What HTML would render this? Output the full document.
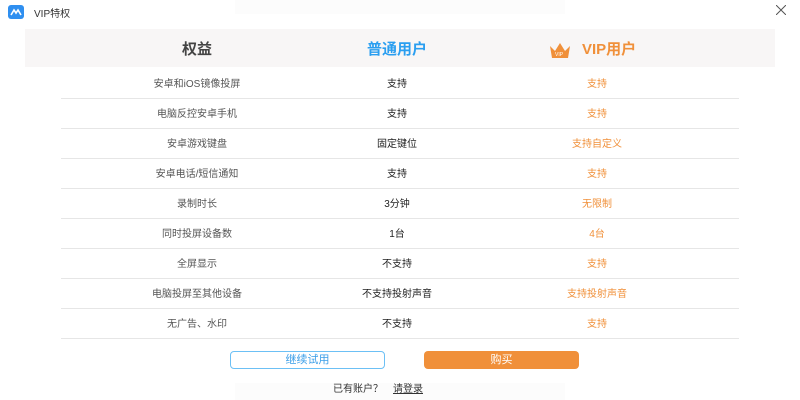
<!DOCTYPE html>
<html><head><meta charset="utf-8"><style>
*{margin:0;padding:0;box-sizing:border-box}
body{width:800px;height:400px;background:#fff;position:relative;overflow:hidden;font-family:"Liberation Sans","Noto Sans CJK SC",sans-serif;color:#333}
.ab{position:absolute}
.band{left:25px;top:29px;width:750px;height:38px;background:#f8f6f6}
.h{top:38px;font-size:15px;font-weight:bold;text-align:center;width:200px}
.row{position:absolute;left:61px;width:678px;height:30px;border-bottom:1px solid #e6e6e6;font-size:10px}
.row span{position:absolute;top:1px;line-height:30px;width:200px;text-align:center}
.c1{left:36px;color:#555}.c2{left:236px;color:#222}.c3{left:436px;color:#f0903a}
.btn{top:351px;width:155px;height:18px;border-radius:4px;text-align:center;font-size:11px;line-height:17px}
</style></head><body>
<div class="ab" style="left:235px;top:0;width:330px;height:14px;background:#fcfcfc"></div>
<div class="ab" style="left:235px;top:383px;width:330px;height:17px;background:#fcfcfc"></div>
<div class="ab" style="left:8px;top:5px;width:16px;height:14px;border-radius:3px;background:#2f8ff0"></div>
<svg class="ab" style="left:9px;top:7px" width="14" height="10"><path d="M2 8 L5 3 L7 6 L9 3 L12 8" stroke="#fff" stroke-width="1.6" fill="none"/></svg>
<div class="ab" style="left:34px;top:5px;font-size:10px;color:#333">VIP特权</div>
<svg class="ab" style="left:776px;top:5px" width="10" height="10"><path d="M0 0L10 10M10 0L0 10" stroke="#555" stroke-width="1"/></svg>
<div class="ab band"></div>
<div class="ab h" style="left:97px;color:#444">权益</div>
<div class="ab h" style="left:297px;color:#2a9ef0">普通用户</div>
<svg class="ab" style="left:549px;top:42px" width="22" height="17"><path d="M1 4 L6 9 L11 1 L16 9 L21 4 L19 16 L3 16Z" fill="#f0903a"/><text x="6" y="14" font-size="5" fill="#fff" font-family="Liberation Sans">VIP</text></svg>
<div class="ab h" style="left:582px;width:62px;text-align:left;color:#f0903a">VIP用户</div>
<div class="row" style="top:69px"><span class="c1">安卓和iOS镜像投屏</span><span class="c2">支持</span><span class="c3">支持</span></div>
<div class="row" style="top:99px"><span class="c1">电脑反控安卓手机</span><span class="c2">支持</span><span class="c3">支持</span></div>
<div class="row" style="top:129px"><span class="c1">安卓游戏键盘</span><span class="c2">固定键位</span><span class="c3">支持自定义</span></div>
<div class="row" style="top:159px"><span class="c1">安卓电话/短信通知</span><span class="c2">支持</span><span class="c3">支持</span></div>
<div class="row" style="top:189px"><span class="c1">录制时长</span><span class="c2">3分钟</span><span class="c3">无限制</span></div>
<div class="row" style="top:219px"><span class="c1">同时投屏设备数</span><span class="c2">1台</span><span class="c3">4台</span></div>
<div class="row" style="top:249px"><span class="c1">全屏显示</span><span class="c2">不支持</span><span class="c3">支持</span></div>
<div class="row" style="top:279px"><span class="c1">电脑投屏至其他设备</span><span class="c2">不支持投射声音</span><span class="c3">支持投射声音</span></div>
<div class="row" style="top:309px"><span class="c1">无广告、水印</span><span class="c2">不支持</span><span class="c3">支持</span></div>
<div class="ab btn" style="left:230px;border:1px solid #6cc0f5;color:#3a9ee8">继续试用</div>
<div class="ab btn" style="left:424px;background:#f0903a;color:#fff;line-height:18px">购买</div>
<div class="ab" style="left:333px;top:380px;font-size:10px;color:#333">已有账户？</div>
<div class="ab" style="left:393px;top:380px;font-size:10px;color:#333;text-decoration:underline">请登录</div>
</body></html>
